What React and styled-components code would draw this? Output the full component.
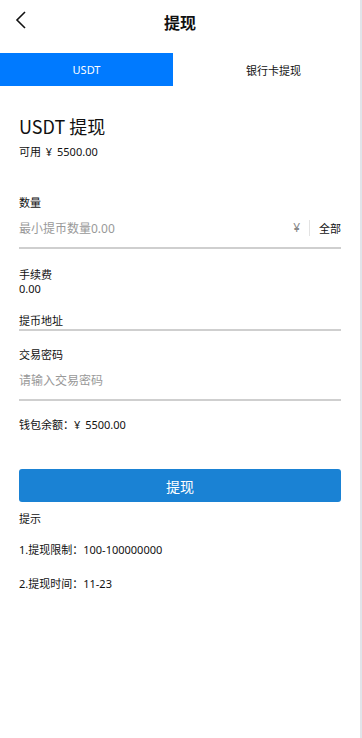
import React from 'react';
import styled, { createGlobalStyle } from 'styled-components';

const GlobalStyle = createGlobalStyle`
  * { box-sizing: border-box; }
  body {
    margin: 0;
    background: #fff;
    font-family: "Noto Sans", "Noto Sans CJK SC", sans-serif;
    color: #111;
  }
`;

const Page = styled.div`
  width: 362px;
  min-height: 738px;
  border-right: 2px solid #e1e5ea;
`;

const Header = styled.div`
  position: relative;
  height: 44px;
  display: flex;
  align-items: center;
  justify-content: center;
`;

const Back = styled.button`
  position: absolute;
  left: 10px;
  top: 8px;
  width: 22px;
  height: 24px;
  border: none;
  background: none;
  padding: 0;
  display: flex;
  align-items: center;
  justify-content: center;
`;

const Title = styled.h1`
  margin: 0;
  font-family: "Noto Sans CJK SC", sans-serif;
  font-size: 16px;
  font-weight: 700;
`;

const Tabs = styled.div`
  margin-top: 9px;
  display: flex;
  height: 33px;
`;

const Tab = styled.div`
  flex: ${p => (p.$active ? '0 0 173px' : '1')};
  display: flex;
  align-items: center;
  justify-content: center;
  padding-left: ${p => (p.$active ? '0' : '14px')};
  font-size: 11px;
  background: ${p => (p.$active ? '#007aff' : '#fff')};
  color: ${p => (p.$active ? '#fff' : '#111')};
`;

const Body = styled.div`
  padding: 0 19px;
`;

const Heading = styled.h2`
  margin: 28px 0 0;
  font-family: "Noto Sans CJK SC", sans-serif;
  font-size: 18px;
  font-weight: 400;
  line-height: 24px;
`;

const Small = styled.div`
  font-size: 11px;
  line-height: ${p => p.$lh || 16}px;
  margin-top: ${p => p.$mt || 0}px;
  word-spacing: ${p => p.$ws || 0}px;
`;

const Field = styled.div`
  padding-bottom: ${p => p.$pb || 0}px;
  border-bottom: ${p => (p.$line ? '2px solid #cfcfcf' : 'none')};
`;

const InputRow = styled.div`
  display: flex;
  align-items: center;
  height: 32px;
  margin-top: 1px;
`;

const Placeholder = styled.div`
  flex: 1;
  font-size: 12px;
  color: #999;
`;

const Yen = styled.span`
  font-size: 12px;
  color: #888;
  padding-right: 9px;
  border-right: 1px solid #e3e3e3;
  line-height: 16px;
`;

const All = styled.span`
  font-size: 11px;
  padding-left: 9px;
`;

const SubmitButton = styled.button`
  display: block;
  width: 100%;
  height: 33px;
  margin-top: 36px;
  border: none;
  border-radius: 3px;
  background: #1a82d4;
  color: #fff;
  font-family: inherit;
  font-size: 14px;
`;

const Hint = styled.div`
  font-size: 11px;
  line-height: 16px;
  margin-top: ${p => p.$mt}px;
`;

const ChevronLeft = () => (
  <svg width="14" height="20" viewBox="0 0 14 20" fill="none">
    <path d="M11 2 L3 10 L11 18" stroke="#111" strokeWidth="1.6" />
  </svg>
);

const App = () => (
  <Page>
    <GlobalStyle />
    <Header>
      <Back><ChevronLeft /></Back>
      <Title>提现</Title>
    </Header>
    <Tabs>
      <Tab $active>USDT</Tab>
      <Tab>银行卡提现</Tab>
    </Tabs>
    <Body>
      <Heading>USDT 提现</Heading>
      <Small $mt={6} $ws={2}>可用 ¥ 5500.00</Small>

      <Field $line $pb={3}>
        <Small $mt={35}>数量</Small>
        <InputRow>
          <Placeholder>最小提币数量0.00</Placeholder>
          <Yen>¥</Yen>
          <All>全部</All>
        </InputRow>
      </Field>

      <Field>
        <Small $mt={19} $lh={14}>手续费</Small>
        <Small $lh={14}>0.00</Small>
      </Field>

      <Field $line>
        <Small $mt={17}>提币地址</Small>
      </Field>

      <Field $line $pb={3}>
        <Small $mt={16}>交易密码</Small>
        <InputRow>
          <Placeholder>请输入交易密码</Placeholder>
        </InputRow>
      </Field>

      <Small $mt={16} $ws={2}>钱包余额：¥ 5500.00</Small>

      <SubmitButton>提现</SubmitButton>

      <Hint $mt={9}>提示</Hint>
      <Hint $mt={15}>1.提现限制：100-100000000</Hint>
      <Hint $mt={18}>2.提现时间：11-23</Hint>
    </Body>
  </Page>
);

export default App;
